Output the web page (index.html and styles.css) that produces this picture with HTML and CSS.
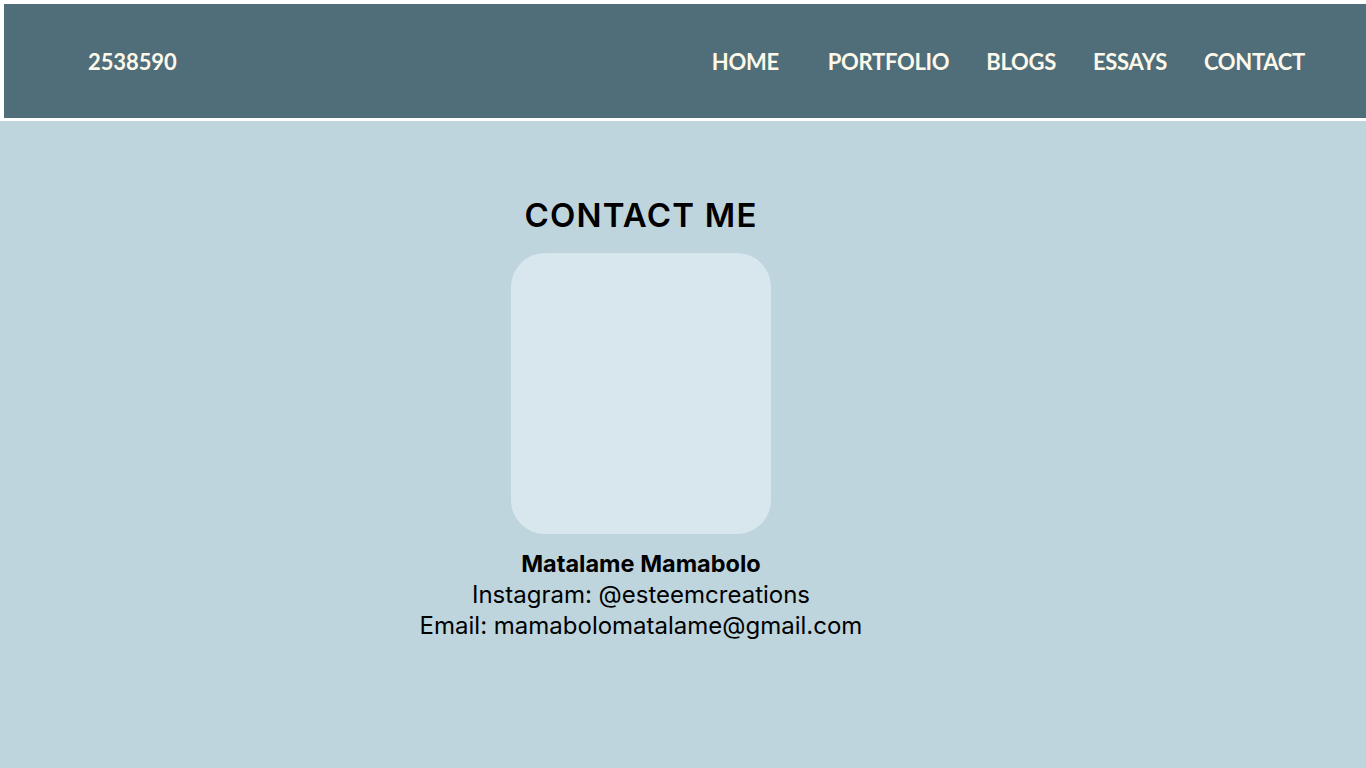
FILE: index.html
```html
<!DOCTYPE html>
<html>
<head>
<meta charset="utf-8">
<link rel="stylesheet" href="styles.css">
</head>
<body>
<header class="topbar">
  <div class="brand">2538590</div>
  <nav class="nav">
    <a class="nav-link nav-home" href="#">HOME</a>
    <a class="nav-link" href="#">PORTFOLIO</a>
    <a class="nav-link" href="#">BLOGS</a>
    <a class="nav-link" href="#">ESSAYS</a>
    <a class="nav-link" href="#">CONTACT</a>
  </nav>
</header>
<main class="content">
  <h1 class="title">CONTACT ME</h1>
  <div class="photo"></div>
  <div class="info">
    <p class="name">Matalame Mamabolo</p>
    <p class="line">Instagram: @esteemcreations</p>
    <p class="line">Email: mamabolomatalame@gmail.com</p>
  </div>
</main>
</body>
</html>
```
FILE: styles.css
```css
html, body {
  margin: 0;
  padding: 0;
}
body {
  min-height: 768px;
  padding-top: 4px;
  box-sizing: border-box;
  background: linear-gradient(#ffffff 0 121px, #bed5de 121px);
}
.topbar {
  margin-left: 4px;
  height: 114px;
  background: #506d7a;
  display: flex;
  align-items: center;
  justify-content: space-between;
  padding: 0 61px 0 84px;
  font-family: "Lato", "Open Sans", sans-serif;
  font-weight: 700;
  color: #fdf9ea;
  box-sizing: border-box;
}
.brand {
  font-size: 22px;
  letter-spacing: -0.1px;
}
.nav {
  display: flex;
  gap: 37px;
}
.nav-link {
  color: #fdf9ea;
  text-decoration: none;
  font-size: 22px;
  letter-spacing: -0.3px;
}
.nav-home {
  margin-right: 12px;
}
.content {
  margin-top: 3px;
  background: #bed5de;
  display: flex;
  flex-direction: column;
  align-items: center;
  padding: 74px 84px 0 0;
  font-family: "Inter", "DejaVu Sans", sans-serif;
  color: #000;
}
.title {
  margin: 0;
  font-size: 33px;
  font-weight: 600;
  line-height: 40px;
  letter-spacing: 1.2px;
}
.photo {
  margin-top: 18px;
  width: 260px;
  height: 281px;
  border-radius: 34px;
  background: #d8e7ee;
}
.info {
  margin-top: 14px;
  text-align: center;
  font-size: 24px;
  line-height: 31px;
}
.info p {
  margin: 0;
}
.name {
  font-weight: 700;
  font-size: 23.5px;
}
```
